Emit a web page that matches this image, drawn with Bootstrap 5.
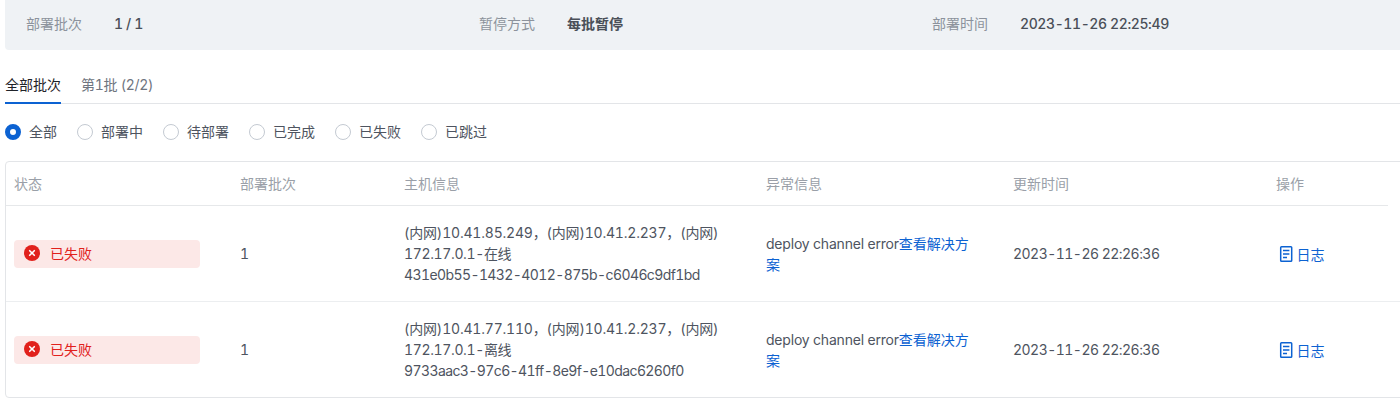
<!DOCTYPE html>
<html lang="zh">
<head>
<meta charset="utf-8">
<link href="https://cdn.jsdelivr.net/npm/bootstrap@5.3.0/dist/css/bootstrap.min.css" rel="stylesheet">
<style>
html,body{height:401px;overflow:hidden;}
body{font-family:Inter,"Noto Sans CJK SC",sans-serif;font-size:14px;font-variant-numeric:tabular-nums;color:#4e5460;padding-left:5px;background:#fff;line-height:21px;margin-right:-12px;}
.sum-panel{height:50px;background:#eff2f5;border-radius:0 0 4px 4px;padding:13px 0 0 21px;display:grid;grid-template-columns:453px 453px 1fr;}
.sum-label{width:88px;color:#8c929c;}
.sum-val{color:#4a4f58;letter-spacing:-.4px;font-weight:500;}
.sum-bold{font-weight:600;letter-spacing:0;}
.tab-strip{margin-top:24px;height:30px;border-bottom:1px solid #e3e5e8;gap:20px;}
.tab-item{height:30px;color:#6f7580;line-height:22px;letter-spacing:-.3px;}
.tab-on{color:#1f2329;border-bottom:2px solid #0c62d2;width:56px;letter-spacing:0;}
.radio-row{margin-top:17px;height:21px;}
.radio-item{width:86px;color:#4e5460;gap:8px;}
.radio-first{width:72px;}
.radio-dot{width:16px;height:16px;border-radius:50%;border:1px solid #c4cad2;background:#fff;display:block;}
.radio-on{border:5px solid #0c62d2;}
.tbl-wrap{margin-top:19px;border:1px solid #e3e5e8;border-radius:4px;}
.data-table{table-layout:fixed;width:1394px;margin:0;--bs-table-color:#4e5460;}
.data-table th,.data-table td{padding:0 9px;border-color:#eceef0;vertical-align:middle;color:#4e5460;line-height:21px;}
.data-table th:first-child,.data-table td:first-child{padding-left:8px;}
.data-table th{height:43px;font-weight:400;color:#9a9fa8;border-bottom:1px solid #e6e8ea;}
.data-table td{height:96px;}
.data-table tbody tr:last-child td{border-bottom:0;}
.data-table .cell-fill{border-bottom-color:transparent;}
.data-table td.nudge-down{padding-top:2px;}
.fail-tag{height:28px;background:#fce8e7;border-radius:4px;color:#e1211c;gap:10px;padding:0 0 2px 10px;width:186px;}
.fail-ico{width:16px;height:16px;display:block;}
.link-blue{color:#0c62d2;text-decoration:none;}
.log-link{gap:2.5px;}
.log-ico{width:18px;height:18px;display:block;}
.data-table .err-cell{letter-spacing:-.2px;}
.err-cell .link-blue{letter-spacing:0;}
.ip-line{letter-spacing:-.2px;}
.net-line{letter-spacing:-.36px;}
.id-line{letter-spacing:-.6px;}
.data-table .time-cell{letter-spacing:-.53px;}
</style>
</head>
<body>
<div class="sum-panel">
  <div class="d-flex"><span class="sum-label">部署批次</span><span class="sum-val">1 / 1</span></div>
  <div class="d-flex"><span class="sum-label">暂停方式</span><span class="sum-val sum-bold">每批暂停</span></div>
  <div class="d-flex"><span class="sum-label">部署时间</span><span class="sum-val">2023-11-26 22:25:49</span></div>
</div>
<div class="tab-strip d-flex">
  <div class="tab-item tab-on">全部批次</div>
  <div class="tab-item">第1批 (2/2)</div>
</div>
<div class="radio-row d-flex">
  <div class="radio-item radio-first d-flex align-items-center"><span class="radio-dot radio-on"></span>全部</div>
  <div class="radio-item d-flex align-items-center"><span class="radio-dot"></span>部署中</div>
  <div class="radio-item d-flex align-items-center"><span class="radio-dot"></span>待部署</div>
  <div class="radio-item d-flex align-items-center"><span class="radio-dot"></span>已完成</div>
  <div class="radio-item d-flex align-items-center"><span class="radio-dot"></span>已失败</div>
  <div class="radio-item d-flex align-items-center"><span class="radio-dot"></span>已跳过</div>
</div>
<div class="tbl-wrap">
<table class="table data-table">
  <colgroup><col style="width:225px"><col style="width:164px"><col style="width:362px"><col style="width:247px"><col style="width:263px"><col style="width:121px"><col></colgroup>
  <thead><tr><th>状态</th><th>部署批次</th><th>主机信息</th><th>异常信息</th><th>更新时间</th><th>操作</th><th class="cell-fill"></th></tr></thead>
  <tbody>
  <tr>
    <td class="nudge-down"><div class="fail-tag d-flex align-items-center"><svg class="fail-ico" viewBox="0 0 16 16"><circle cx="8" cy="8" r="8" fill="#e1211c"/><path d="M5.7 5.7l4.6 4.6M10.3 5.7l-4.6 4.6" stroke="#fff" stroke-width="1.6" stroke-linecap="round"/></svg>已失败</div></td>
    <td>1</td>
    <td><div class="ip-line">(内网)10.41.85.249，(内网)10.41.2.237，(内网)</div><div class="net-line">172.17.0.1-在线</div><div class="id-line">431e0b55-1432-4012-875b-c6046c9df1bd</div></td>
    <td class="err-cell nudge-down">deploy channel error<a class="link-blue" href="#">查看解决方</a><br><a class="link-blue" href="#">案</a></td>
    <td class="time-cell">2023-11-26 22:26:36</td>
    <td class="nudge-down"><a class="link-blue log-link d-flex align-items-center" href="#"><svg class="log-ico" viewBox="0 0 18 18"><rect x="4.7" y="1.7" width="11" height="14.6" rx=".8" fill="none" stroke="#0c62d2" stroke-width="1.5"/><path d="M7 5.5h6.4M7 9h6.4M7 12.5h4" stroke="#0c62d2" stroke-width="1.3"/></svg>日志</a></td>
    <td></td>
  </tr>
  <tr>
    <td class="nudge-down"><div class="fail-tag d-flex align-items-center"><svg class="fail-ico" viewBox="0 0 16 16"><circle cx="8" cy="8" r="8" fill="#e1211c"/><path d="M5.7 5.7l4.6 4.6M10.3 5.7l-4.6 4.6" stroke="#fff" stroke-width="1.6" stroke-linecap="round"/></svg>已失败</div></td>
    <td>1</td>
    <td><div class="ip-line">(内网)10.41.77.110，(内网)10.41.2.237，(内网)</div><div class="net-line">172.17.0.1-离线</div><div class="id-line">9733aac3-97c6-41ff-8e9f-e10dac6260f0</div></td>
    <td class="err-cell nudge-down">deploy channel error<a class="link-blue" href="#">查看解决方</a><br><a class="link-blue" href="#">案</a></td>
    <td class="time-cell">2023-11-26 22:26:36</td>
    <td class="nudge-down"><a class="link-blue log-link d-flex align-items-center" href="#"><svg class="log-ico" viewBox="0 0 18 18"><rect x="4.7" y="1.7" width="11" height="14.6" rx=".8" fill="none" stroke="#0c62d2" stroke-width="1.5"/><path d="M7 5.5h6.4M7 9h6.4M7 12.5h4" stroke="#0c62d2" stroke-width="1.3"/></svg>日志</a></td>
    <td></td>
  </tr>
  </tbody>
</table>
</div>
<script src="https://cdn.jsdelivr.net/npm/bootstrap@5.3.0/dist/js/bootstrap.bundle.min.js"></script>
</body>
</html>
